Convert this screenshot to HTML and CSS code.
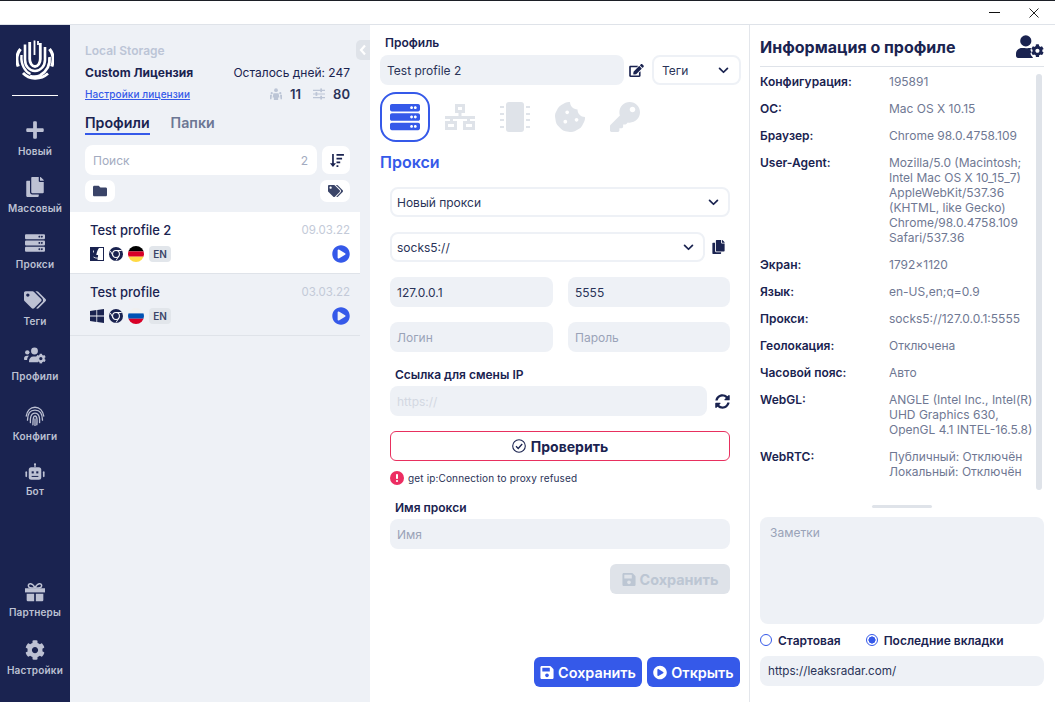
FILE: index.html
```html
<!DOCTYPE html>
<html lang="ru">
<head>
<meta charset="utf-8">
<title>Profile</title>
<link rel="stylesheet" href="styles.css">
</head>
<body>
<svg class="defs" width="0" height="0" aria-hidden="true">
  <defs>
    <symbol id="i-plus" viewBox="0 0 448 512"><path d="M416 208H272V64c0-17.67-14.33-32-32-32h-32c-17.67 0-32 14.33-32 32v144H32c-17.67 0-32 14.33-32 32v32c0 17.67 14.33 32 32 32h144v144c0 17.67 14.33 32 32 32h32c17.67 0 32-14.33 32-32V304h144c17.67 0 32-14.33 32-32v-32c0-17.67-14.33-32-32-32z"/></symbol>
    <symbol id="i-copy" viewBox="0 0 448 512"><path d="M320 448v40c0 13.255-10.745 24-24 24H24c-13.255 0-24-10.745-24-24V120c0-13.255 10.745-24 24-24h72v296c0 30.879 25.121 56 56 56h168zm0-344V0H152c-13.255 0-24 10.745-24 24v368c0 13.255 10.745 24 24 24h272c13.255 0 24-10.745 24-24V128H344c-13.2 0-24-10.8-24-24zm120.971-31.029L375.029 7.029A24 24 0 0 0 358.059 0H352v96h96v-6.059a24 24 0 0 0-7.029-16.97z"/></symbol>
    <symbol id="i-server" viewBox="0 0 512 512"><path d="M480 160H32c-17.673 0-32-14.327-32-32V64c0-17.673 14.327-32 32-32h448c17.673 0 32 14.327 32 32v64c0 17.673-14.327 32-32 32zm-48-88c-13.255 0-24 10.745-24 24s10.745 24 24 24 24-10.745 24-24-10.745-24-24-24zm-64 0c-13.255 0-24 10.745-24 24s10.745 24 24 24 24-10.745 24-24-10.745-24-24-24zm112 248H32c-17.673 0-32-14.327-32-32v-64c0-17.673 14.327-32 32-32h448c17.673 0 32 14.327 32 32v64c0 17.673-14.327 32-32 32zm-48-88c-13.255 0-24 10.745-24 24s10.745 24 24 24 24-10.745 24-24-10.745-24-24-24zm-64 0c-13.255 0-24 10.745-24 24s10.745 24 24 24 24-10.745 24-24-10.745-24-24-24zm112 248H32c-17.673 0-32-14.327-32-32v-64c0-17.673 14.327-32 32-32h448c17.673 0 32 14.327 32 32v64c0 17.673-14.327 32-32 32zm-48-88c-13.255 0-24 10.745-24 24s10.745 24 24 24 24-10.745 24-24-10.745-24-24-24zm-64 0c-13.255 0-24 10.745-24 24s10.745 24 24 24 24-10.745 24-24-10.745-24-24-24z"/></symbol>
    <symbol id="i-tags" viewBox="0 0 640 512"><path d="M497.941 225.941L286.059 14.059A48 48 0 0 0 252.118 0H48C21.49 0 0 21.49 0 48v204.118a48 48 0 0 0 14.059 33.941l211.882 211.882c18.744 18.745 49.136 18.746 67.882 0l204.118-204.118c18.745-18.745 18.745-49.137 0-67.882zM112 160c-26.51 0-48-21.49-48-48s21.49-48 48-48 48 21.49 48 48-21.49 48-48 48zm513.941 133.823L421.823 497.941c-18.745 18.745-49.137 18.745-67.882 0l-.36-.36L527.64 323.522c16.999-16.999 26.36-39.6 26.36-63.64s-9.362-46.641-26.36-63.64L331.397 0h48.721a48 48 0 0 1 33.941 14.059l211.882 211.882c18.745 18.745 18.745 49.137 0 67.882z"/></symbol>
    <symbol id="i-cog" viewBox="0 0 512 512"><path d="M487.4 315.7l-42.6-24.6c4.3-23.2 4.3-47 0-70.2l42.6-24.6c4.9-2.8 7.1-8.6 5.5-14-11.1-35.6-30-67.8-54.7-94.6-3.8-4.1-10-5.1-14.8-2.3L380.8 110c-17.9-15.4-38.5-27.3-60.8-35.1V25.8c0-5.6-3.9-10.5-9.4-11.7-36.7-8.2-74.3-7.8-109.2 0-5.5 1.2-9.4 6.1-9.4 11.7V75c-22.2 7.9-42.8 19.8-60.8 35.1L88.7 85.5c-4.9-2.8-11-1.9-14.8 2.3-24.7 26.7-43.6 58.9-54.7 94.6-1.7 5.4.6 11.2 5.5 14L67.3 221c-4.3 23.2-4.3 47 0 70.2l-42.6 24.6c-4.9 2.8-7.1 8.6-5.5 14 11.1 35.6 30 67.8 54.7 94.6 3.8 4.1 10 5.1 14.8 2.3l42.6-24.6c17.9 15.4 38.5 27.3 60.8 35.1v49.2c0 5.6 3.9 10.5 9.4 11.7 36.7 8.2 74.3 7.8 109.2 0 5.5-1.2 9.4-6.1 9.4-11.7v-49.2c22.2-7.9 42.8-19.8 60.8-35.1l42.6 24.6c4.9 2.8 11 1.9 14.8-2.3 24.7-26.7 43.6-58.9 54.7-94.6 1.5-5.5-.7-11.3-5.6-14.1zM256 336c-44.1 0-80-35.9-80-80s35.9-80 80-80 80 35.9 80 80-35.9 80-80 80z"/></symbol>
    <symbol id="i-users-cog" viewBox="0 0 640 512"><circle cx="96" cy="150" r="64"/><circle cx="305" cy="110" r="100"/><path d="M0 340c0-60 30-90 90-90h60c-40 30-55 70-60 120H32C14 370 0 358 0 340zM145 420c0-90 50-150 130-150h60c40 0 60 8 72 20l-10 10 5 80-6 30 18 30H170c-14 0-25-8-25-20z"/><use href="#i-cog" x="340" y="180" width="300" height="300"/></symbol>
    <symbol id="i-user-cog" viewBox="0 0 640 512"><circle cx="224" cy="128" r="128"/><path d="M134 288h70c30 10 55 10 85 0h30c10 0 22 2 32 5-8 6-14 14-16 25-6 20 0 36 16 46-4 8-4 16 0 22-16 10-22 28-16 46 6 20 18 40 32 55 6 8 12 15 23 18-10 8-20 13-30 13H48c-26.500 0-48-21.500-48-48v-48c0-74 60-134 134-134z"/><use href="#i-cog" x="340" y="196" width="300" height="312"/></symbol>
    <symbol id="i-edit" viewBox="0 0 576 512"><path d="M402.600 83.200l90.200 90.200c3.800 3.800 3.800 10 0 13.800L274.400 405.600l-92.800 10.300c-12.400 1.400-22.900-9.100-21.500-21.500l10.300-92.800L388.800 83.200c3.800-3.800 10-3.800 13.800 0zm162-22.900l-48.800-48.800c-15.200-15.200-39.900-15.200-55.200 0l-35.400 35.400c-3.800 3.800-3.800 10 0 13.800l90.200 90.200c3.800 3.800 10 3.800 13.800 0l35.400-35.400c15.200-15.300 15.200-40 0-55.200zM384 346.200V448H64V128h229.800c3.200 0 6.200-1.300 8.500-3.500l40-40c7.600-7.600 2.200-20.500-8.500-20.500H48C21.500 64 0 85.500 0 112v352c0 26.500 21.500 48 48 48h352c26.500 0 48-21.500 48-48V306.200c0-10.700-12.900-16-20.500-8.500l-40 40c-2.200 2.300-3.500 5.300-3.500 8.500z"/></symbol>
    <symbol id="i-play" viewBox="0 0 512 512"><path d="M256 8C119 8 8 119 8 256s111 248 248 248 248-111 248-248S393 8 256 8zm115.700 272l-176 101c-15.800 8.800-35.700-2.500-35.700-21V152c0-18.400 19.800-29.800 35.700-21l176 107c16.400 9.200 16.400 32.900 0 42z"/></symbol>
    <symbol id="i-save" viewBox="0 0 448 512"><path d="M433.941 129.941l-83.882-83.882A48 48 0 0 0 316.118 32H48C21.490 32 0 53.490 0 80v352c0 26.510 21.490 48 48 48h352c26.510 0 48-21.490 48-48V163.882a48 48 0 0 0-14.059-33.941zM224 416c-35.346 0-64-28.654-64-64 0-35.346 28.654-64 64-64s64 28.654 64 64c0 35.346-28.654 64-64 64zm96-304.520V212c0 6.627-5.373 12-12 12H76c-6.627 0-12-5.373-12-12V108c0-6.627 5.373-12 12-12h228.520c3.183 0 6.235 1.264 8.485 3.515l3.480 3.480A11.996 11.996 0 0 1 320 111.480z"/></symbol>
    <symbol id="i-folder" viewBox="0 0 512 512"><path d="M464 128H272l-64-64H48C21.490 64 0 85.490 0 112v288c0 26.510 21.490 48 48 48h416c26.510 0 48-21.490 48-48V176c0-26.510-21.490-48-48-48z"/></symbol>
    <symbol id="i-sync" viewBox="0 0 512 512"><path d="M370.720 133.280C339.458 104.008 298.888 87.962 255.848 88c-77.458.068-144.328 53.178-162.791 126.850-1.344 5.363-6.122 9.150-11.651 9.150H24.103c-7.498 0-13.194-6.807-11.807-14.176C33.933 94.924 134.813 8 256 8c66.448 0 126.791 26.136 171.315 68.685L463.030 40.970C478.149 25.851 504 36.559 504 57.941V192c0 13.255-10.745 24-24 24H345.941c-21.382 0-32.090-25.851-16.971-40.971l41.750-41.749zM32 296h134.059c21.382 0 32.090 25.851 16.971 40.971l-41.750 41.750c31.262 29.273 71.835 45.319 114.876 45.280 77.418-.07 144.315-53.144 162.787-126.849 1.344-5.363 6.122-9.150 11.651-9.150h57.304c7.498 0 13.194 6.807 11.807 14.176C478.067 417.076 377.187 504 256 504c-66.448 0-126.791-26.136-171.315-68.685L48.970 471.030C33.851 486.149 8 475.441 8 454.059V320c0-13.255 10.745-24 24-24z"/></symbol>
    <symbol id="i-chev" viewBox="0 0 12 8"><path d="M1.500 1.500 6 6l4.500-4.500" fill="none" stroke="currentColor" stroke-width="2" stroke-linecap="round" stroke-linejoin="round"/></symbol>
    <symbol id="i-chrome" viewBox="0 0 16 16"><circle cx="8" cy="8" r="8"/><circle cx="8" cy="8" r="3.900" fill="none" stroke="#fff" stroke-width="1.200"/><path d="M8 4h6.500M4.600 10 1.500 4.500M11.400 10 8 15.500" stroke="#fff" stroke-width="1.100" fill="none"/></symbol>
  </defs>
</svg>

<div class="app">
  <header class="titlebar">
    <span class="win-min"></span>
    <svg class="win-close" viewBox="0 0 10 10"><path d="M.5.500l9 9M9.500.500l-9 9"/></svg>
  </header>
  <div class="main">
    <nav class="sidebar">
      <svg class="logo line-icon" viewBox="0 0 38 40" stroke="#fff" stroke-linecap="butt">
        <path d="M4.500 9C.5 14 .2 21 2.300 26.500" stroke-width="3.200"/>
        <path d="M33.500 9C37.500 14 37.800 21 35.700 26.500" stroke-width="3.200"/>
        <path d="M5.500 15c-1 10 4 17 9 19" stroke-width="2.400"/>
        <path d="M9 4.500V20c0 6 4.500 11 10 11s10-5 10-11V7" stroke-width="2.600"/>
        <path d="M13.700 2v17c0 4 2.300 7.500 5.300 7.500s5.300-3.500 5.300-7.500V3" stroke-width="2.800"/>
        <path d="M18.500 0.500V15M22 5v-4" stroke-width="1.800"/>
        <path d="M33.500 17c1 9-4 15-9.500 18.500-3 1.500-6 1.500-10 .5" stroke-width="2.800"/>
        <path d="M7 33c6 6.500 17 7.500 25 .5" stroke-width="2.800"/>
      </svg>
      <div class="side-rule"></div>
      <ul class="nav-list">
        <li class="nav-item"><svg class="nav-icon"><use href="#i-plus"/></svg><span>Новый</span></li>
        <li class="nav-item"><svg class="nav-icon"><use href="#i-copy"/></svg><span>Массовый</span></li>
        <li class="nav-item"><svg class="nav-icon"><use href="#i-server"/></svg><span>Прокси</span></li>
        <li class="nav-item"><svg class="nav-icon"><use href="#i-tags"/></svg><span>Теги</span></li>
        <li class="nav-item nav-snug"><svg class="nav-icon"><use href="#i-users-cog"/></svg><span>Профили</span></li>
        <li class="nav-item nav-gap nav-snug">
          <svg class="nav-icon line-icon" viewBox="0 0 24 24" stroke="currentColor" stroke-width="1.600" stroke-linecap="round">
            <path d="M1.500 12C2.500 6 6.500 1.500 12 1.500S21.500 6 22.500 12"/><path d="M3 17C3 10 6 5 12 5s9 5 9 12"/>
            <path d="M6.500 20c-.5-4 0-11.500 5.500-11.500S18 16 17.500 20"/><path d="M9.500 22.500c.3-3-.6-10.500 2.500-10.500s2.500 7 2.200 10.500"/><path d="M12 15.500V23.500"/>
          </svg><span>Конфиги</span>
        </li>
        <li class="nav-item nav-tight">
          <svg class="nav-icon" viewBox="0 0 24 24"><rect x="4.500" y="5" width="15" height="15" rx="3"/><rect x="11.200" y="1" width="1.600" height="4"/><circle cx="12" cy="1.500" r="1.300"/><rect x="0.500" y="10" width="2" height="7" rx="1"/><rect x="21.500" y="10" width="2" height="7" rx="1"/><rect x="8" y="10" width="2.500" height="2.500" fill="#1a2350"/><rect x="13.500" y="10" width="2.500" height="2.500" fill="#1a2350"/><rect x="8" y="15.500" width="8" height="1.200" fill="#1a2350"/></svg><span>Бот</span>
        </li>
      </ul>
      <ul class="nav-list nav-bottom">
        <li class="nav-item nav-snug">
          <svg class="nav-icon" viewBox="0 0 24 24"><path d="M0 7.500h24v5H0z"/><path d="M2 14h9v9H3.500A1.500 1.500 0 0 1 2 21.500zM13 14h9v7.500a1.500 1.500 0 0 1-1.500 1.500H13z"/><path d="M12 7C9 1 4 1 4 4.500S9 7 12 7zm0 0c3-6 8-6 8-2.500S15 7 12 7z" fill="none" stroke="currentColor" stroke-width="1.800"/></svg><span>Партнеры</span>
        </li>
        <li class="nav-item nav-snug"><svg class="nav-icon"><use href="#i-cog"/></svg><span>Настройки</span></li>
      </ul>
    </nav>

    <section class="list-panel">
      <button class="collapse" type="button"><svg viewBox="0 0 8 12"><path d="M6 1.500 2 6l4 4.500" fill="none" stroke="#fff" stroke-width="2.200"/></svg></button>
      <div class="storage">Local Storage</div>
      <div class="lic-row">
        <strong>Custom Лицензия</strong>
        <span>Осталось дней: 247</span>
      </div>
      <div class="lic-row lic-row2">
        <a class="lic-link">Настройки лицензии</a>
        <span class="stats">
          <svg class="stat-icon" viewBox="0 0 14 14"><circle cx="7" cy="2.500" r="2.200"/><path d="M4 6h6l1 5H9.500v3h-5v-3H3z"/><circle cx="2" cy="6" r="1.300"/><circle cx="12" cy="6" r="1.300"/><path d="M0 8h2.300l-.6 5H0zM14 8h-2.300l.6 5H14z"/></svg>
          <b>11</b>
          <svg class="stat-icon stat-gap" viewBox="0 0 14 14"><path d="M0 2h14v1.400H0zM0 6.300h14v1.400H0zM0 10.600h14V12H0z"/><rect x="8.500" y="0.500" width="2" height="4.400"/><rect x="3" y="4.800" width="2" height="4.400"/><rect x="8.500" y="9" width="2" height="4.400"/></svg>
          <b>80</b>
        </span>
      </div>
      <div class="tabs">
        <span class="tab tab-active">Профили</span>
        <span class="tab">Папки</span>
      </div>
      <div class="search-row">
        <div class="search"><span>Поиск</span><span>2</span></div>
        <button class="icon-btn sort" type="button">
          <svg viewBox="0 0 16 14"><path d="M3.300 0h1.800v10h2.400L4.200 14 .9 10h2.400z"/><path d="M8 0h8v2H8zM8 4h6v2H8zM8 8h4v2H8zM8 12h2v2H8z"/></svg>
        </button>
      </div>
      <div class="filter-row">
        <button class="icon-btn filter" type="button"><svg class="ic-folder"><use href="#i-folder"/></svg></button>
        <button class="icon-btn filter" type="button"><svg class="ic-tags"><use href="#i-tags"/></svg></button>
      </div>
      <ul class="profiles">
        <li class="profile profile-active">
          <div class="p-top"><span class="p-name">Test profile 2</span><span class="p-date">09.03.22</span></div>
          <div class="p-bottom">
            <svg class="os" viewBox="0 0 14 14"><rect width="14" height="14" fill="#1a2350"/><path d="M9 1H13V13H7.500C7.900 11 8 9.500 8.100 8H6.300C6.800 5 7.800 2.500 9 1z" fill="#fff"/><path d="M3.500 3.500v2M10.500 3.500v2M3.500 10c2 1.500 5 1.500 7 0" stroke="#fff" stroke-width=".8" fill="none"/></svg>
            <svg class="chrome"><use href="#i-chrome"/></svg>
            <svg class="flag" viewBox="0 0 16 16"><clipPath id="fc1"><circle cx="8" cy="8" r="8"/></clipPath><g clip-path="url(#fc1)"><rect width="16" height="5.400" fill="#000"/><rect y="5.400" width="16" height="5.300" fill="#d80027"/><rect y="10.700" width="16" height="5.300" fill="#ffda44"/></g></svg>
            <span class="lang">EN</span>
            <svg class="run"><use href="#i-play"/></svg>
          </div>
        </li>
        <li class="profile">
          <div class="p-top"><span class="p-name">Test profile</span><span class="p-date">03.03.22</span></div>
          <div class="p-bottom">
            <svg class="os" viewBox="0 0 14 14"><path d="M0 2 6.400 1v5.600H0zM7.200.9 14 0v6.600H7.200zM0 7.400h6.400V13L0 12zM7.200 7.400H14V14l-6.800-1z" fill="#1a2350"/></svg>
            <svg class="chrome"><use href="#i-chrome"/></svg>
            <svg class="flag" viewBox="0 0 16 16"><clipPath id="fc2"><circle cx="8" cy="8" r="8"/></clipPath><g clip-path="url(#fc2)"><rect width="16" height="5.400" fill="#f0f0f0"/><rect y="5.400" width="16" height="5.300" fill="#0052b4"/><rect y="10.700" width="16" height="5.300" fill="#d80027"/></g></svg>
            <span class="lang">EN</span>
            <svg class="run"><use href="#i-play"/></svg>
          </div>
        </li>
      </ul>
    </section>

    <section class="edit-panel">
      <div class="label label-top">Профиль</div>
      <div class="name-row">
        <div class="field name-field">Test profile 2</div>
        <svg class="ic-edit"><use href="#i-edit"/></svg>
        <div class="select tags-select"><span>Теги</span><svg class="chev"><use href="#i-chev"/></svg></div>
      </div>
      <div class="mode-row">
        <span class="mode mode-active"><svg class="ic-mode-server"><use href="#i-server"/></svg></span>
        <span class="mode">
          <svg class="ic-mode" viewBox="0 0 30 30"><path d="M10 2h10v9h-3.500v3H30v3h-5v2h5v9H18v-9h4v-2H8v2h4v9H0v-9h5v-2H0v-3h13.500v-3H10zM13 5v3h4V5zM3 22v3h6v-3zM21 22v3h6v-3z" fill-rule="evenodd"/></svg>
        </span>
        <span class="mode">
          <svg class="ic-mode" viewBox="0 0 30 30"><rect x="6" y="0" width="18" height="30" rx="3"/><path d="M0 4h4v2H0zM0 11h4v2H0zM0 17h4v2H0zM0 24h4v2H0zM26 4h4v2h-4zM26 11h4v2h-4zM26 17h4v2h-4zM26 24h4v2h-4z"/></svg>
        </span>
        <span class="mode">
          <svg class="ic-mode" viewBox="0 0 512 512"><path d="M510.520 255.820c-69.970-.85-126.470-57.690-126.470-127.860-70.170 0-127-56.490-127.860-126.450-27.260-4.140-55.130.3-79.720 12.820l-69.130 35.220a132.221 132.221 0 0 0-57.790 57.810l-35.100 68.880a132.645 132.645 0 0 0-12.820 80.950l12.080 76.270a132.521 132.521 0 0 0 37.160 72.960l54.770 54.760a132.036 132.036 0 0 0 72.710 37.060l76.710 12.150c27.510 4.360 55.700-.11 80.530-12.760l69.130-35.210a132.273 132.273 0 0 0 57.790-57.810l35.100-68.880c12.560-24.640 17.010-52.580 12.910-79.910zM176 368c-17.670 0-32-14.330-32-32s14.330-32 32-32 32 14.330 32 32-14.330 32-32 32zm32-160c-17.670 0-32-14.330-32-32s14.330-32 32-32 32 14.330 32 32-14.330 32-32 32zm160 128c-17.670 0-32-14.330-32-32s14.330-32 32-32 32 14.330 32 32-14.330 32-32 32z"/></svg>
        </span>
        <span class="mode">
          <svg class="ic-mode" viewBox="0 0 512 512"><path d="M512 176.001C512 273.203 433.202 352 336 352c-11.220 0-22.190-1.062-32.827-3.069l-24.012 27.014A23.999 23.999 0 0 1 261.223 384H224v40c0 13.255-10.745 24-24 24h-40v40c0 13.255-10.745 24-24 24H24c-13.255 0-24-10.745-24-24v-78.059c0-6.365 2.529-12.470 7.029-16.971l161.802-161.802C163.108 213.814 160 195.271 160 176 160 78.798 238.797.001 335.999 0 433.488-.001 512 78.511 512 176.001zM336 128c0 26.510 21.490 48 48 48s48-21.490 48-48-21.490-48-48-48-48 21.490-48 48z"/></svg>
        </span>
      </div>
      <h2 class="section-title">Прокси</h2>
      <div class="proxy-form">
        <div class="select full"><span>Новый прокси</span><svg class="chev"><use href="#i-chev"/></svg></div>
        <div class="proto-row">
          <div class="select proto"><span>socks5://</span><svg class="chev"><use href="#i-chev"/></svg></div>
          <svg class="ic-copy"><use href="#i-copy"/></svg>
        </div>
        <div class="pair">
          <div class="field">127.0.0.1</div>
          <div class="field">5555</div>
        </div>
        <div class="pair">
          <div class="field ph">Логин</div>
          <div class="field ph">Пароль</div>
        </div>
        <div class="label label-ip">Ссылка для смены IP</div>
        <div class="ip-row">
          <div class="field ph-light grow">https://</div>
          <svg class="ic-sync"><use href="#i-sync"/></svg>
        </div>
        <button class="check" type="button">
          <svg class="ic-check line-icon" viewBox="0 0 14 14" stroke="#1a2350"><circle cx="7" cy="7" r="6.300" stroke-width="1.100"/><path d="M4 7.300 6.200 9.500 10.200 5" stroke-width="1.300"/></svg>
          Проверить
        </button>
        <div class="error">
          <svg class="ic-err" viewBox="0 0 14 14"><circle cx="7" cy="7" r="7" fill="#ec2d62"/><rect x="6" y="3" width="2" height="5" rx=".8" fill="#fff"/><circle cx="7" cy="10" r="1.100" fill="#fff"/></svg>
          <span>get ip:Connection to proxy refused</span>
        </div>
        <div class="label label-name">Имя прокси</div>
        <div class="field ph">Имя</div>
        <div class="save-wrap">
          <button class="btn-disabled" type="button"><svg class="ic-save"><use href="#i-save"/></svg>Сохранить</button>
        </div>
      </div>
      <div class="actions">
        <button class="btn-primary b-save" type="button"><svg class="ic-save"><use href="#i-save"/></svg>Сохранить</button>
        <button class="btn-primary b-open" type="button"><svg class="ic-save"><use href="#i-play"/></svg>Открыть</button>
      </div>
    </section>

    <aside class="info-panel">
      <div class="info-head">
        <h1>Информация о профиле</h1>
        <svg class="ic-usercog"><use href="#i-user-cog"/></svg>
      </div>
      <div class="scrollbar"></div>
      <dl class="info-list">
        <div class="info-row"><dt>Конфигурация:</dt><dd>195891</dd></div>
        <div class="info-row"><dt>ОС:</dt><dd>Mac OS X 10.15</dd></div>
        <div class="info-row"><dt>Браузер:</dt><dd>Chrome 98.0.4758.109</dd></div>
        <div class="info-row"><dt>User-Agent:</dt><dd>Mozilla/5.0 (Macintosh;<br>Intel Mac OS X 10_15_7)<br>AppleWebKit/537.36<br>(KHTML, like Gecko)<br>Chrome/98.0.4758.109<br>Safari/537.36</dd></div>
        <div class="info-row"><dt>Экран:</dt><dd>1792×1120</dd></div>
        <div class="info-row"><dt>Язык:</dt><dd>en-US,en;q=0.9</dd></div>
        <div class="info-row"><dt>Прокси:</dt><dd>socks5://127.0.0.1:5555</dd></div>
        <div class="info-row"><dt>Геолокация:</dt><dd>Отключена</dd></div>
        <div class="info-row"><dt>Часовой пояс:</dt><dd>Авто</dd></div>
        <div class="info-row"><dt>WebGL:</dt><dd>ANGLE (Intel Inc., Intel(R)<br>UHD Graphics 630,<br>OpenGL 4.1 INTEL-16.5.8)</dd></div>
        <div class="info-row"><dt>WebRTC:</dt><dd>Публичный: Отключён<br>Локальный: Отключён</dd></div>
      </dl>
      <div class="handle"></div>
      <div class="notes">Заметки</div>
      <div class="radios">
        <label class="radio"><span class="dot"></span>Стартовая</label>
        <label class="radio"><span class="dot dot-on"></span>Последние вкладки</label>
      </div>
      <div class="field url">https://leaksradar.com/</div>
    </aside>
  </div>
</div>
</body>
</html>
```

FILE: styles.css
```css
* { box-sizing: border-box; }
html, body { margin: 0; height: 100%; overflow: hidden; }
body { font-family: Inter, "Noto Sans", sans-serif; color: #1a2350; background: #fff; font-size: 12px; }
ul, dl, dd, h1, h2 { margin: 0; padding: 0; list-style: none; }
button { font-family: inherit; border: 0; padding: 0; cursor: pointer; }
svg { display: block; fill: currentColor; }
svg.line-icon { fill: none; }
.defs { position: absolute; }

.app { height: 702px; display: flex; flex-direction: column; }
.titlebar { height: 25px; flex: none; border-top: 1px solid #1c1f26; border-bottom: 1px solid #dfe3e9; display: flex; align-items: center; justify-content: flex-end; padding-right: 16px; gap: 29px; }
.win-min { width: 11px; height: 1px; background: #111; }
.win-close { width: 10px; height: 10px; fill: none; stroke: #222; stroke-width: 1; }
.main { flex: 1; display: flex; min-height: 0; }

.sidebar { width: 70px; flex: none; background: #1a2350; display: flex; flex-direction: column; color: #bdc1d3; }
.logo { width: 38px; height: 40px; margin: 15px 0 0 16px; flex: none; }
.side-rule { height: 1px; background: #fff; margin: 15px 12px 22px; flex: none; }
.nav-item { height: 56.5px; display: flex; flex-direction: column; align-items: center; font-size: 10px; font-weight: 600; line-height: 14px; letter-spacing: .2px; }
.nav-icon { width: 22px; height: 20px; margin: 2px 0 4px; }
.nav-snug .nav-icon { margin-bottom: 3px; }
.nav-tight .nav-icon { margin-bottom: 1px; }
.nav-gap { margin-top: 3.5px; }
.nav-bottom { margin-top: auto; padding-bottom: 6px; }
.nav-bottom .nav-item { height: 58px; }

.list-panel { width: 300px; flex: none; background: #eef1f6; position: relative; padding: 18px 0 0 15px; }
.collapse { position: absolute; right: 0; top: 15px; width: 14px; height: 20px; background: #dfe3e9; border-radius: 5px 0 0 5px; display: flex; align-items: center; justify-content: center; }
.collapse svg { width: 8px; height: 12px; }
.storage { font-size: 12px; font-weight: 600; color: #bcc5d6; line-height: 16px; }
.lic-row { width: 265px; display: flex; justify-content: space-between; align-items: center; line-height: 16px; margin-top: 6px; }
.lic-row strong { font-weight: 700; font-size: 12px; }
.lic-row span { font-size: 12px; }
.lic-row2 { margin-top: 5px; }
.lic-link { color: #3559e9; font-size: 10px; font-weight: 500; letter-spacing: .1px; text-decoration: underline; }
.stats { display: flex; align-items: center; }
.stats b { font-weight: 600; font-size: 13px; color: #2a3358; margin-left: 8px; }
.stat-icon { width: 12px; height: 12px; color: #bcc5d6; }
.stat-gap { margin-left: 12px; }
.tabs { display: flex; gap: 21px; margin-top: 11px; }
.tab { font-size: 14.200px; font-weight: 600; color: #6c7794; line-height: 19px; height: 22px; border-bottom: 2px solid transparent; }
.tab-active { color: #1a2350; border-color: #3559e9; }
.search-row { width: 265px; display: flex; justify-content: space-between; align-items: center; margin-top: 10px; }
.search { width: 232px; height: 30px; background: #fff; border-radius: 8px; display: flex; justify-content: space-between; align-items: center; padding: 0 9px 0 8px; color: #a3abc0; font-size: 12px; }
.icon-btn { background: #fff; border-radius: 7px; display: flex; align-items: center; justify-content: center; color: #1a2350; }
.sort { width: 28px; height: 28px; }
.sort svg { width: 15px; height: 13px; }
.filter-row { width: 265px; display: flex; justify-content: space-between; margin-top: 5px; }
.filter { width: 30px; height: 22px; color: #3a4468; }
.ic-folder { width: 14px; height: 14px; }
.ic-tags { width: 15px; height: 12px; }
.profiles { margin: 10px 10px 0 -15px; }
.profile { height: 62px; padding: 10px 10px 0 20px; border-bottom: 1px solid #dfe3e9; }
.profile-active { background: #fff; }
.p-top { display: flex; justify-content: space-between; align-items: center; line-height: 17px; }
.p-name { font-size: 13px; font-weight: 500; }
.p-date { font-size: 11.500px; color: #c3cad8; }
.p-bottom { display: flex; align-items: center; margin-top: 6px; }
.os { width: 14px; height: 14px; }
.chrome { width: 14px; height: 14px; margin-left: 5px; color: #1a2350; }
.flag { width: 16px; height: 16px; margin-left: 5px; }
.lang { width: 22px; height: 16px; margin-left: 5px; background: #e2e6eb; border-radius: 4px; font-size: 10px; font-weight: 600; color: #3a4468; text-align: center; line-height: 16px; }
.run { width: 18px; height: 18px; margin-left: auto; color: #3559e9; }

.edit-panel { width: 380px; flex: none; border-right: 1px solid #e3e6eb; padding: 10px 9px 0 10px; position: relative; display: flex; flex-direction: column; }
.label { font-size: 12px; font-weight: 600; line-height: 15px; }
.label-top { margin-left: 5px; }
.name-row { display: flex; align-items: center; margin-top: 5px; }
.field { height: 30px; background: #eef1f6; border-radius: 8px; display: flex; align-items: center; padding: 0 7px; font-size: 12px; color: #2a3358; }
.name-field { width: 244px; flex: none; }
.ic-edit { width: 15px; height: 13px; margin: 0 8px 0 5px; flex: none; }
.select { height: 30px; border: 2px solid #eef1f6; border-radius: 8px; display: flex; align-items: center; justify-content: space-between; font-size: 12px; color: #2a3358; padding: 0 9px 0 5px; }
.chev { width: 11px; height: 7px; color: #1a2350; }
.tags-select { width: 89px; flex: none; padding-left: 8px; padding-right: 10px; }
.mode-row { display: flex; gap: 5px; margin-top: 7px; }
.mode { width: 50px; height: 50px; display: flex; align-items: center; justify-content: center; color: #dfe3e9; border: 2px solid transparent; border-radius: 16px; }
.mode-active { border-color: #3559e9; color: #3559e9; }
.ic-mode-server { width: 30px; height: 30px; }
.ic-mode { width: 30px; height: 30px; }
.section-title { font-size: 16px; font-weight: 600; color: #3559e9; line-height: 20px; margin-top: 10px; }
.proxy-form { margin: 15px 10px 0 10px; display: flex; flex-direction: column; }
.full { width: 100%; }
.proto-row { display: flex; align-items: center; margin-top: 15px; }
.proto { width: 315px; }
.ic-copy { width: 13px; height: 14px; margin-left: 7px; }
.pair { display: grid; grid-template-columns: 163px 162px; gap: 15px; margin-top: 15px; }
.ph { color: #9aa3b8; }
.ph-light { color: #d3d8e2; }
.grow { width: 318px; }
.label-ip { margin: 15px 0 0 5px; }
.ip-row { display: flex; align-items: center; margin-top: 4px; }
.ic-sync { width: 15px; height: 15px; margin-left: 8px; }
.check { height: 30px; margin-top: 15px; background: #fff; border: 1px solid #e8305f; border-radius: 6px; font-size: 14px; font-weight: 700; color: #1a2350; display: flex; align-items: center; justify-content: center; gap: 5px; }
.ic-check { width: 14px; height: 14px; }
.error { display: flex; align-items: center; gap: 4px; margin-top: 10px; font-size: 10px; line-height: 14px; letter-spacing: .15px; color: #2a3358; }
.ic-err { width: 14px; height: 14px; }
.label-name { margin: 15px 0 4px 5px; }
.save-wrap { display: flex; justify-content: flex-end; margin-top: 15px; }
.btn-disabled { width: 120px; height: 30px; background: #dfe3e9; color: #bcc6d3; border-radius: 6px; font-size: 14.400px; font-weight: 700; display: flex; align-items: center; justify-content: center; gap: 4px; }
.ic-save { width: 14px; height: 15px; }
.actions { display: flex; justify-content: flex-end; gap: 5px; margin-top: 63px; }
.btn-primary { height: 30px; background: #3559e9; color: #fff; border-radius: 6px; font-size: 14.400px; font-weight: 600; display: flex; align-items: center; justify-content: center; gap: 4px; }
.b-save { width: 108px; }
.b-open { width: 93px; }

.info-panel { flex: 1; min-width: 0; padding: 0 11px 0 10px; position: relative; display: flex; flex-direction: column; }
.info-head { height: 42px; border-bottom: 1px solid #dfe3e9; display: flex; align-items: center; justify-content: space-between; padding-top: 2px; }
.info-head h1 { font-size: 16px; font-weight: 700; line-height: 20px; }
.ic-usercog { width: 28px; height: 23px; }
.scrollbar { position: absolute; left: 286px; top: 49px; width: 6px; height: 416px; background: #dfe3e9; border-radius: 3px; }
.info-list { padding-top: 7px; height: 433px; }
.info-row { display: flex; line-height: 15px; margin-bottom: 12px; }
.info-row dt { width: 129px; flex: none; font-weight: 600; font-size: 12px; }
.info-row dd { font-size: 12px; color: #6f7893; white-space: nowrap; }
.handle { width: 60px; height: 3px; background: #dfe3e9; border-radius: 2px; margin: 5px 0 0 112px; flex: none; }
.notes { height: 107px; margin-top: 9px; background: #eef1f6; border-radius: 8px; padding: 8px 10px; color: #9aa3b8; font-size: 12px; line-height: 15px; flex: none; }
.radios { display: flex; gap: 25px; margin-top: 8px; height: 16px; align-items: center; }
.radio { display: flex; align-items: center; gap: 6px; font-size: 12px; font-weight: 600; }
.dot { width: 12px; height: 12px; border-radius: 50%; border: 1px solid #3559e9; background: #fff; }
.dot-on { background: radial-gradient(circle, #3559e9 0 3.300px, #fff 3.800px); }
.url { margin-top: 8px; padding-left: 8px; flex: none; font-size: 11.700px; }
```
